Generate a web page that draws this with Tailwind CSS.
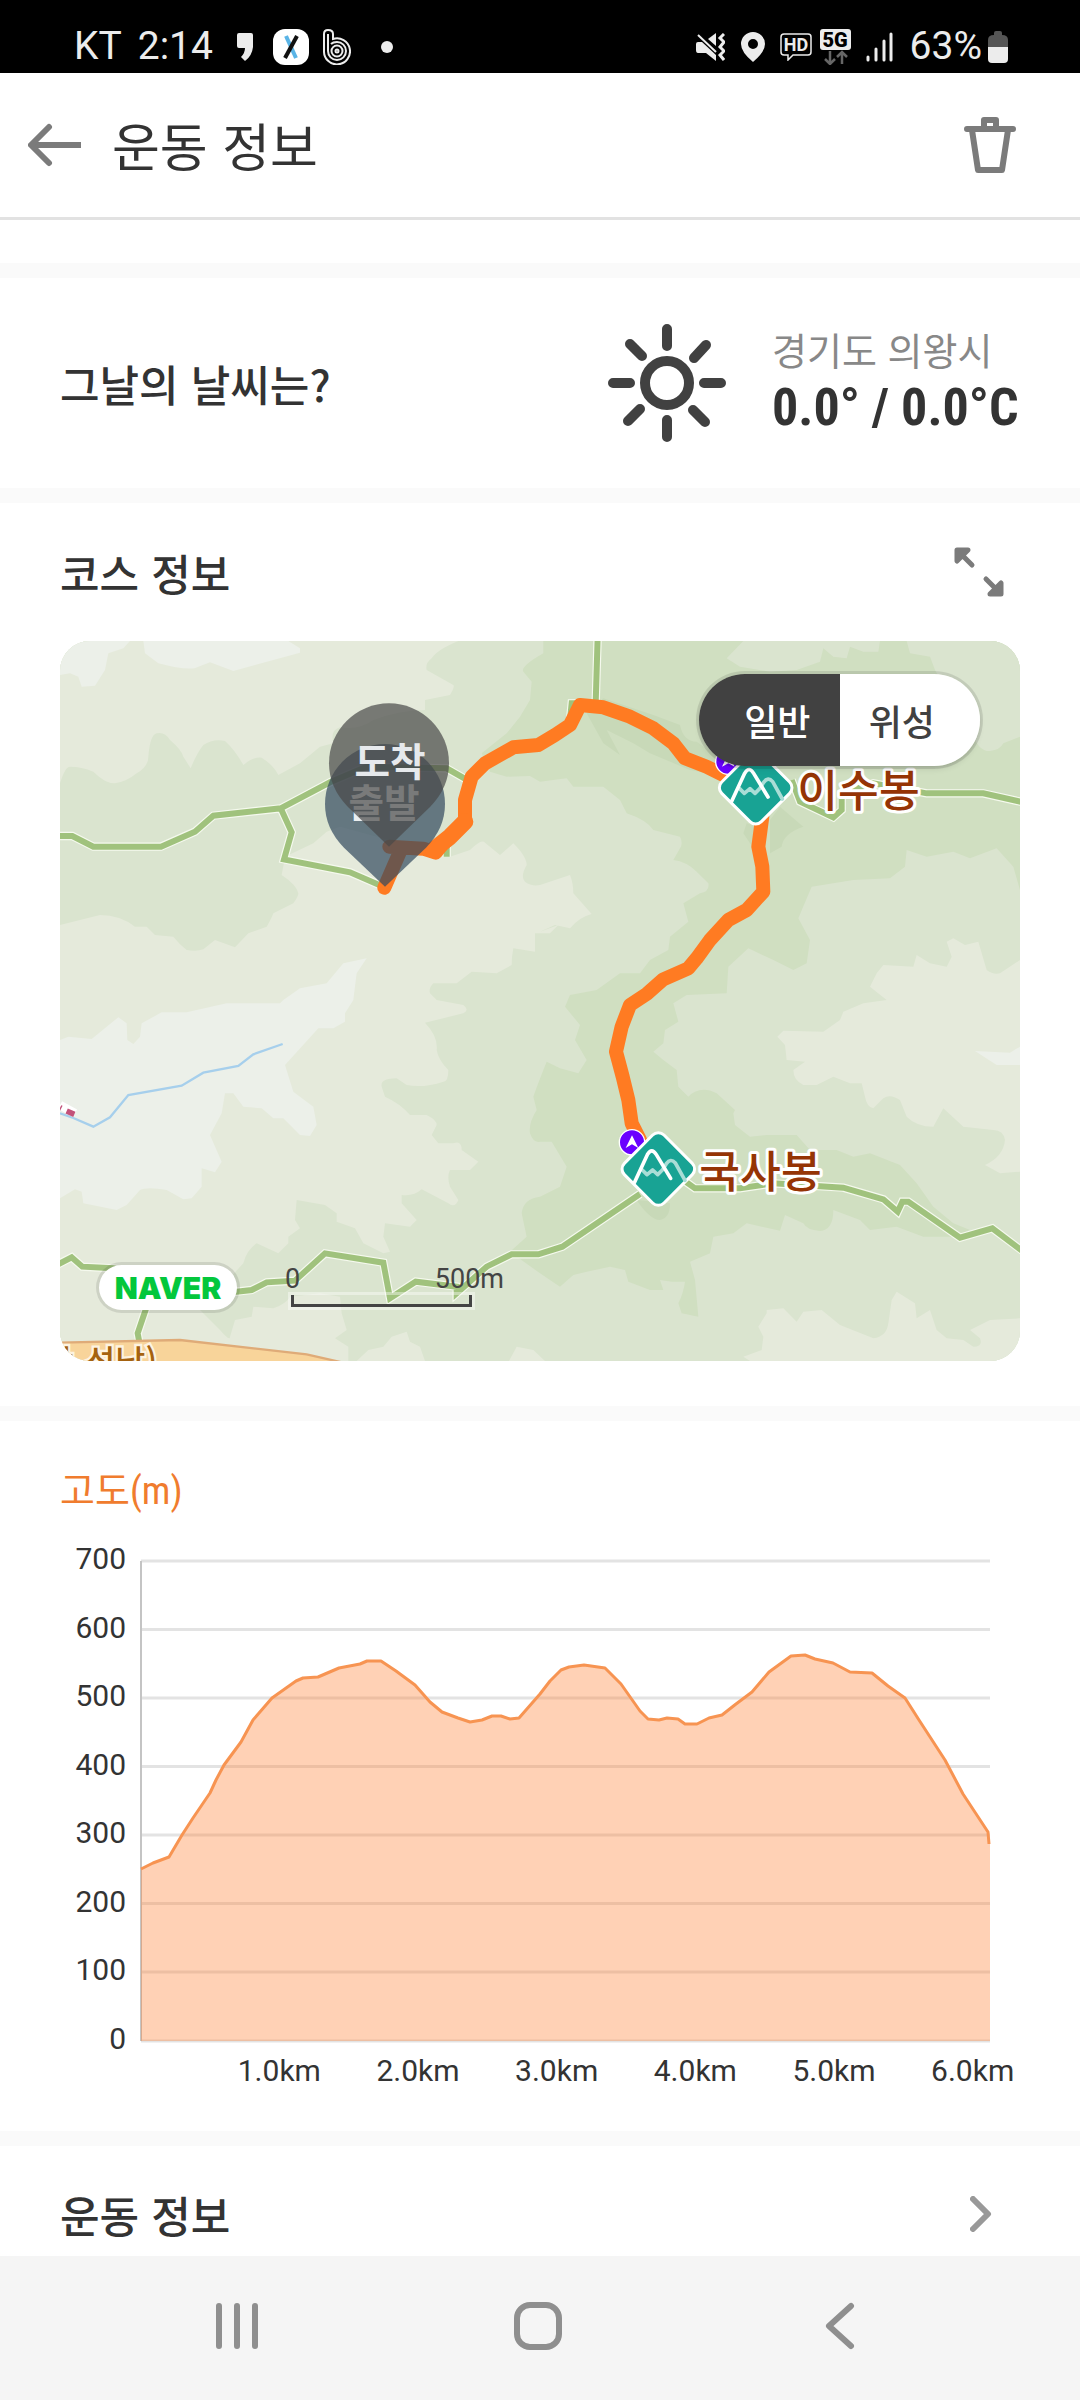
<!DOCTYPE html>
<html lang="ko">
<head>
<meta charset="utf-8">
<meta name="viewport" content="width=device-width, initial-scale=1">
<title>운동 정보</title>
<script src="https://cdn.jsdelivr.net/npm/@tailwindcss/browser@4"></script>
</head>
<body class="bg-white">
<div class="flex min-h-screen flex-col bg-white font-['Noto_Sans_CJK_KR',sans-serif] text-[#333333]">

  <!-- Status bar -->
  <div class="flex h-[73px] shrink-0 items-center bg-black pt-5 pr-[72px] pl-[74px] font-[Roboto,sans-serif] text-[39px] leading-none text-[#ececec]">
    <span>KT</span>
    <span class="ml-4">2:14</span>
    <svg class="ml-6 h-7 w-4" viewBox="0 0 16 28" fill="#ececec" aria-hidden="true"><path d="M0 2Q0 0 2 0H14Q16 0 16 2V14Q15 23 8 28L4 24Q8 20 8 15H2Q0 15 0 13Z"/></svg>
    <svg class="ml-5 h-9 w-9" viewBox="0 0 36 36" aria-hidden="true"><rect width="36" height="36" rx="12" fill="#fff"/><path d="M13 7L23 29" stroke="#5ab4e6" stroke-width="4"/><path d="M24 7L12 29" stroke="#111" stroke-width="4"/></svg>
    <svg class="ml-3.5 h-9 w-7" viewBox="0 0 28 36" fill="none" stroke="#ececec" stroke-width="2" aria-hidden="true"><path d="M1 22V5Q1 1 5 1Q10 1 10 5V10A13 13 0 1 1 1 22"/><path d="M5 5V22A9 9 0 1 0 14 13Q10 13 8 15"/><circle cx="14" cy="22" r="5.500"/><circle cx="14" cy="22" r="1.500"/></svg>
    <span class="ml-[30px] size-3 rounded-full bg-[#ececec]"></span>
    <span class="flex-1"></span>
    <svg class="h-7 w-[29px]" viewBox="0 0 29 28" fill="#ececec" aria-hidden="true"><path d="M0 11Q0 9 2 9H6L20 22V28L10 20H2Q0 20 0 17Z"/><path d="M12 6L20 0V13Z"/><path d="M2 2L20 19" stroke="#ececec" stroke-width="2"/><path d="M28 1L24 5L28 9L24 14L28 18L24 22L28 27" fill="none" stroke="#ececec" stroke-width="3"/></svg>
    <svg class="ml-4 h-[30px] w-6" viewBox="0 0 24 30" aria-hidden="true"><path fill="#ececec" fill-rule="evenodd" d="M12 0A12 12 0 0 1 24 12Q24 20 12 30Q0 20 0 12A12 12 0 0 1 12 0ZM12 7A5 5 0 1 0 12 17A5 5 0 1 0 12 7Z"/></svg>
    <svg class="ml-[15px] h-7 w-8" viewBox="0 0 32 28" aria-hidden="true"><path d="M4 1H28Q31 1 31 4V19Q31 22 28 22H13L8 27V22H4Q1 22 1 19V4Q1 1 4 1Z" fill="none" stroke="#ececec" stroke-width="1.500"/><text x="16" y="18" text-anchor="middle" font-family="Roboto" font-weight="700" font-size="18" fill="#ececec">HD</text></svg>
    <svg class="ml-2 h-9 w-8" viewBox="0 0 32 36" aria-hidden="true"><rect width="31" height="21" rx="3" fill="#ececec"/><text x="15" y="18" text-anchor="middle" font-family="Roboto" font-weight="900" font-size="20" fill="#000">5G</text><path d="M10 22V35M5 30L10 35L15 30M22 35V23M17 28L22 23L27 28" fill="none" stroke="#666" stroke-width="2.500"/></svg>
    <svg class="ml-3.5 h-[30px] w-7" viewBox="0 0 28 30" stroke="#ececec" stroke-width="3" stroke-linecap="round" aria-hidden="true"><path d="M2 25V28M10 17V28M18 9V28M25 2V28"/></svg>
    <span class="ml-4">63%</span>
    <svg class="ml-1.5 h-8 w-5" viewBox="0 0 20 32" aria-hidden="true"><path d="M6 2Q6 0 8 0H12Q14 0 14 2V4Q20 4 20 9V16H0V9Q0 4 6 4Z" fill="#555"/><path d="M0 16H20V28Q20 32 16 32H4Q0 32 0 28Z" fill="#ececec"/></svg>
  </div>

  <!-- App bar -->
  <header class="flex h-[147px] shrink-0 items-center border-b-[3px] border-[#e2e2e2] pr-16 pl-7">
    <button type="button" aria-label="뒤로">
      <svg class="h-11 w-[54px]" viewBox="0 0 54 44" fill="none" stroke="#7b7b7b" stroke-width="6"><path d="M3 22H53"/><path d="M21 4L3 22L21 40" stroke-linecap="round" stroke-linejoin="round"/></svg>
    </button>
    <h1 class="ml-[30px] flex-1 text-[52px] leading-[60px]">운동 정보</h1>
    <button type="button" aria-label="삭제">
      <svg class="h-14 w-[52px]" viewBox="0 0 52 56" fill="none" stroke="#7b7b7b" stroke-width="6" stroke-linecap="round" stroke-linejoin="round"><path d="M3 12H49M20 12V3H32V12M8 13L14 53H38L44 13"/></svg>
    </button>
  </header>

  <main class="flex-1">
    <div class="h-[43px]"></div>

    <!-- Weather -->
    <section class="flex h-[240px] items-center border-y-[15px] border-[#fafafa] px-15">
      <h2 class="flex-1 text-[43px] leading-[60px] font-medium">그날의 날씨는?</h2>
      <svg class="size-[118px]" viewBox="-59 -59 118 118" fill="none" stroke="#414141" stroke-width="10" stroke-linecap="round" role="img" aria-label="맑음"><circle r="22"/><path d="M0 -54V-37M0 54V37M-54 0H-37M54 0H37M-37 -39L-25 -27M39 -38L27 -25M-39 38L-27 26M38 39L26 27"/></svg>
      <div class="ml-[46px] w-[248px]">
        <p class="text-[38px] leading-[50px] text-[#888888]">경기도 의왕시</p>
        <p class="font-['Liberation_Sans_Narrow','Roboto_Condensed',Roboto,sans-serif] text-[52px] leading-[68px] font-bold whitespace-nowrap">0.0° / 0.0°C</p>
      </div>
    </section>

    <!-- Course map -->
    <section class="border-b-[15px] border-[#fafafa] px-15 pb-[45px]">
      <div class="flex h-[138px] items-center justify-between">
        <h2 class="text-[43px] leading-[60px] font-medium">코스 정보</h2>
        <button type="button" class="mr-4" aria-label="지도 확대">
          <svg class="size-[50px]" viewBox="0 0 50 50" fill="#7b7b7b" stroke="#7b7b7b" stroke-width="5" stroke-linecap="round" stroke-linejoin="round"><path d="M3 3H14L3 14ZM5 5L18 18M47 47H36L47 36ZM45 45L32 32"/></svg>
        </button>
      </div>

      <div class="relative overflow-hidden rounded-[30px] bg-[#dae4cf]">
        <svg class="block w-full" viewBox="60 63 2880 2160" font-family="'Noto Sans CJK KR', sans-serif" role="img" aria-label="코스 지도">
          <rect x="60" y="63" width="2880" height="2160" fill="#dae4cf"/>
          <!-- Lower slopes -->
          <g fill="#e5eadb">
            <path d="M60 490Q75 440 90 440Q125 440 160 455Q195 490 225 490Q260 485 290 460Q325 440 325 410Q330 345 350 340Q375 335 390 360Q425 390 430 410L452 445Q470 400 490 375Q520 355 555 363Q585 390 610 435Q640 410 665 413Q700 435 715 465L780 430L840 380L880 370Q870 330 900 322Q960 330 1000 300Q1080 270 1155 270V240L1230 225Q1245 200 1240 195L1160 150Q1155 130 1175 115Q1190 90 1255 63H60Z"/>
            <path d="M60 915L180 885Q240 885 285 920H320L345 945L400 950Q420 975 440 990Q470 995 490 988L525 960L585 982L625 940L680 920Q695 895 700 880L760 850Q775 830 775 820Q770 795 725 765L735 710L820 670L860 635L900 620L1230 710L1290 690Q1325 655 1335 668L1380 705L1420 670Q1460 710 1460 735Q1440 770 1455 785Q1475 800 1500 795L1590 765Q1600 790 1600 820L1655 882Q1620 890 1590 925L1545 915L1500 935L1555 915L1530 940H1485V995L1420 985Q1415 1010 1415 1035L1370 1060L1295 1055L1250 1090H1180Q1165 1105 1170 1120L1190 1140L1270 1155Q1290 1170 1270 1180L1155 1208Q1195 1250 1190 1290Q1195 1320 1225 1350Q1225 1385 1210 1385Q1150 1405 1100 1395L1070 1375Q1020 1375 1025 1400L1035 1430Q1080 1450 1110 1485H1160Q1190 1500 1190 1515L1175 1545L1195 1570H1240Q1265 1560 1265 1590L1315 1625L1290 1650H1230Q1220 1670 1230 1700L1255 1740Q1245 1765 1225 1750L1145 1708Q1120 1730 1085 1725V1750L1130 1800L1110 1820L1035 1810L1030 1850L1050 1895L1030 1900L970 1870L945 1825L890 1805V1780L855 1755L770 1740L765 1800L780 1825L745 1850V1870L715 1900L650 1870Q620 1890 610 1930L480 2070L540 2130Q570 2165 570 2150L585 2100L635 2090L640 2060L700 2065Q740 2050 750 2030L840 2020L900 2030L905 2080L920 2130L885 2155L925 2180V2223H60Z"/>
            <path d="M950 2223L985 2190L1030 2180L1055 2150L1100 2135L1110 2165L1140 2180L1155 2223ZM1407 2223L1430 2180L1480 2190L1515 2223Z"/>
            <path d="M2490 1100L2510 1060L2530 1035L2620 1040L2630 1005L2670 1030L2720 1040L2735 1010L2720 965L2740 955L2775 975L2815 965L2840 1050Q2860 1065 2880 1060L2940 1020V1655L2880 1660L2835 1635Q2890 1610 2895 1560Q2890 1530 2860 1530L2770 1520L2710 1465L2680 1520Q2630 1520 2600 1490L2580 1440Q2550 1420 2530 1435L2500 1465Q2480 1460 2475 1430L2465 1390H2430L2380 1370L2330 1395H2290Q2260 1380 2260 1350L2295 1325L2240 1320L2235 1275L2212 1250L2230 1232L2350 1235L2400 1200L2410 1175L2470 1150L2540 1140Z"/>
            <path d="M2110 2210L2165 2190L2170 2150L2155 2120L2180 2080V2070L2230 2065L2270 2105L2290 2075L2345 2070L2400 2115L2500 2155Q2540 2150 2545 2110L2555 2040L2570 2015L2625 2050L2630 2095L2670 2070L2690 2130L2720 2155L2770 2160L2800 2180Q2830 2180 2820 2155L2790 2130L2850 2100L2940 2095V2223H2130Z"/>
          </g>
          <g fill="#ecf0e9">
            <path d="M60 165L90 160L115 170L125 200L165 197L195 150L205 100L250 85L270 63H60ZM310 63L315 100L355 130Q450 155 475 140L510 127L580 153L780 98V85L745 63Z"/>
            <path d="M730 1140L780 1105L860 1090L910 1030L980 1015L950 1060L940 1140L915 1180V1205L880 1225H835L735 1335L760 1415L820 1460L830 1515L810 1548L780 1545L730 1495H700L665 1465L610 1460L580 1420H555L545 1480L510 1545L545 1625L525 1657L485 1645V1700L455 1735L430 1738L380 1710Q320 1700 300 1710L260 1755L230 1770L130 1750L125 1715L105 1708L60 1735V1260L85 1250L155 1257L235 1192L260 1210L262 1260L280 1272L300 1250L305 1210L365 1177H440L560 1150H720Z"/>
            <path d="M2805 1293L2910 1298L2940 1280V1335H2870Z"/>
          </g>
          <!-- Ridges -->
          <path fill="#d0dfc1" d="M1510 63V100Q1440 140 1450 155L1475 185L1470 240L1440 290L1400 340L1325 400L1350 455L1400 470L1470 468L1500 485L1580 475L1600 500L1690 500L1740 540L1760 580Q1820 600 1840 630L1920 650Q1930 670 1920 685L1900 720Q1940 725 1970 755L2005 790Q2010 815 1980 820L1930 850L1945 905L1890 950L1885 990L1830 1020L1800 1060H1740L1670 1110L1590 1125L1575 1160L1620 1215L1605 1260L1640 1320L1615 1360L1560 1345L1520 1325Q1490 1400 1480 1430L1490 1470Q1465 1510 1470 1540Q1480 1570 1500 1565L1535 1565L1580 1640L1560 1700L1500 1730Q1450 1735 1445 1780L1460 1850L1410 1895L1500 1960L1560 2000L1600 1965L1640 1955L1710 1940L1755 1950L1765 1985L1830 2010L1870 2010L1860 1980L1895 1985L1935 1985Q1930 2020 1915 2050L1925 2080L1975 2090L1965 1980L1950 1925L2010 1900L2020 1850L2080 1840L2120 1810L2220 1832L2235 1785L2290 1810Q2300 1830 2340 1833Q2380 1830 2380 1770L2460 1800L2490 1830L2570 1820L2650 1850H2740L2790 1830L2740 1810L2680 1760L2630 1690L2580 1635L2490 1600L2440 1610L2390 1590L2310 1590L2270 1545H2180L2130 1550L2085 1515L2080 1480L2085 1470L2030 1420Q1980 1395 1945 1430L1915 1400L1910 1350L1870 1320L1840 1295L1870 1270L1875 1230L1915 1205L1900 1150L1940 1125L2060 1120L2065 1040L2125 985L2200 1020L2260 1050L2300 1030L2310 960L2275 895L2315 800L2440 780L2550 775L2595 740L2600 690L2660 710L2740 695L2790 715L2870 685L2920 740L2940 810V63Z"/>
          <g fill="#dae4cf">
            <path d="M2060 115L2110 63H2520L2515 95H2470L2430 80L2420 115L2380 110L2350 85L2340 125L2270 150L2190 155L2100 140Z"/>
            <path d="M2600 63L2610 100L2670 110L2685 150L2800 350Q2820 395 2850 393Q2880 390 2890 370L2940 350V63Z"/>
          </g>
          <g fill="#c8d9b8">
            <path d="M1690 235L1840 285L1920 315Q1930 365 1970 365L2060 430V470L1950 450L1830 400L1780 370L1700 330L1740 405L1690 370L1640 280Z"/>
            <path d="M2220 560L2290 620Q2230 640 2225 680L2190 700V600ZM2120 610L2110 640L2150 700V620ZM1790 1740Q1830 1800 1860 1800Q1890 1795 1890 1750Z"/>
          </g>
          <!-- Stream and boundary mark -->
          <path d="M60 1480L100 1494L160 1520L210 1492L265 1425L425 1397L490 1358L595 1338L640 1303L728 1272" fill="none" stroke="#a6cfec" stroke-width="7"/>
          <path d="M60 1455L105 1480" stroke="#fff" stroke-width="26"/><path d="M60 1463L64 1465M80 1473L103 1483" stroke="#c2527a" stroke-width="17"/>
          <!-- Trails -->
          <g fill="none">
            <g stroke="#f5f9ee" stroke-width="25">
              <path id="trail" d="M50 648H97L160 680H363L465 635L520 587L722 565L870 487L980 440L1220 445L1290 485M722 565L755 637L732 718L930 757L1030 800M1220 710V680M1673 50L1667 250M1590 300L1595 250L1630 250M2255 480L2280 545L2380 592L2405 570V520L2500 490L2660 520H2830L2950 547M50 1935L95 1912L127 1940L220 1945L500 2010L590 2015L635 2010L680 1987L765 1982L855 1900L1030 1928L1050 2035L1127 1985L1250 2000V2020L1340 1940L1415 1903H1495L1567 1880L1800 1722M1930 1680L1965 1705H2100L2200 1690L2410 1703L2530 1738L2573 1775L2587 1745H2605L2760 1853L2857 1825L2950 1895M320 2060L293 2140L310 2230"/>
            </g>
            <path stroke="#a0c27d" stroke-width="18" d="M50 648H97L160 680H363L465 635L520 587L722 565L870 487L980 440L1220 445L1290 485M722 565L755 637L732 718L930 757L1030 800M1220 710V680M1673 50L1667 250M1590 300L1595 250L1630 250M2255 480L2280 545L2380 592L2405 570V520L2500 490L2660 520H2830L2950 547M50 1935L95 1912L127 1940L220 1945L500 2010L590 2015L635 2010L680 1987L765 1982L855 1900L1030 1928L1050 2035L1127 1985L1250 2000V2020L1340 1940L1415 1903H1495L1567 1880L1800 1722M1930 1680L1965 1705H2100L2200 1690L2410 1703L2530 1738L2573 1775L2587 1745H2605L2760 1853L2857 1825L2950 1895M320 2060L293 2140L310 2230"/>
          </g>
          <!-- Highway -->
          <path d="M50 2168L420 2160L800 2203L940 2235H50Z" fill="#f8d49a" stroke="#dfab78" stroke-width="7"/>
          <text x="136" y="2262" font-size="98" font-weight="500" fill="#a5620f" stroke="#fdf3e0" stroke-width="14" paint-order="stroke" text-anchor="start">성남)</text>
          <text x="100" y="2262" font-size="98" font-weight="500" fill="#a5620f" stroke="#fdf3e0" stroke-width="14" paint-order="stroke" text-anchor="end">상</text>
          <!-- Recorded route -->
          <g fill="none" stroke="#ff7b22" stroke-width="42" stroke-linejoin="round" stroke-linecap="round">
            <path d="M1033 803L1080 695M1048 680L1150 686L1187 698L1220 658L1275 605V540L1295 470L1335 430L1420 382L1495 375L1545 345L1590 315L1620 255L1690 262L1770 290L1840 325L1900 370L1935 415L2000 440L2080 480"/>
            <path d="M1180 690L1230 650L1275 605" stroke-width="50"/>
            <path d="M2167 590L2155 680L2167 740L2170 815L2120 870L2065 900L2010 960L1970 1015L1945 1045L1870 1078L1820 1122L1770 1155L1745 1220L1728 1295L1748 1370L1765 1440L1775 1510L1800 1560"/>
          </g>
          <!-- Direction marks -->
          <g fill="#6a00ff" stroke="#fff" stroke-width="4">
            <circle cx="2065" cy="425" r="38"/><circle cx="1776" cy="1567" r="38"/>
            <path d="M2065 402L2084 440L2065 430L2046 440ZM1776 1546L1795 1584L1776 1573L1757 1584Z" fill="#fff" stroke="none"/>
          </g>
          <!-- Peaks -->
          <defs>
            <g id="peak">
              <rect x="-84" y="-84" width="168" height="168" rx="24" transform="rotate(45)" fill="#18a394" stroke="#fff" stroke-width="9"/>
              <g fill="none" stroke-linecap="round" stroke-linejoin="round" stroke-width="11">
                <path d="M-48 3L-34 17L-17 3L-2 17L12 3L24 -16Q37 -34 51 -18L80 34" stroke="#a9ddd6"/>
                <path d="M-72 41L-33 -43Q-20 -66 -6 -43L37 28" stroke="#fff"/>
              </g>
            </g>
          </defs>
          <use href="#peak" x="2147" y="503"/>
          <use href="#peak" x="1855" y="1647"/>
          <g font-size="133" font-weight="500" fill="#953405" stroke="#fff" stroke-width="18" stroke-linejoin="round" paint-order="stroke">
            <text x="2272" y="560">이수봉</text>
            <text x="1978" y="1704">국사봉</text>
          </g>
          <!-- Start and finish pins -->
          <g text-anchor="middle" font-size="116" font-weight="700">
            <path d="M1035 800L912 683Q855 625 855 552A180 180 0 0 1 1215 552Q1215 625 1158 683Z" fill="#32495e" fill-opacity=".7"/>
            <text x="1032" y="592" fill="#fff" fill-opacity=".9">출발</text>
            <path d="M1047 680L924 561Q867 503 867 430A180 180 0 0 1 1227 430Q1227 503 1170 561Z" fill="#484848" fill-opacity=".7"/>
            <text x="1050" y="468" fill="#e6e9ec">도착</text>
          </g>
        </svg>

        <div class="absolute top-[33px] right-10 flex h-[92px] w-[281px] overflow-hidden rounded-full text-[36px] leading-none font-medium shadow-md ring-3 ring-black/10" role="group" aria-label="지도 종류">
          <button type="button" aria-pressed="true" class="flex-1 bg-[#414141] pl-4 text-white">일반</button>
          <button type="button" aria-pressed="false" class="flex-1 bg-white pr-4 text-[#414141]">위성</button>
        </div>

        <a href="#" class="absolute bottom-[51px] left-[39px] flex h-[45px] w-[138px] items-center justify-center rounded-full bg-white font-[Inter,sans-serif] text-[30px] leading-none font-black text-[#03c73c] ring-3 ring-black/10">NAVER</a>

        <div class="absolute bottom-[54px] left-[231px] w-[181px] font-[Roboto,sans-serif] text-[27px] leading-6 text-[#444444]">
          <div class="-mr-8 -ml-1.5 flex justify-between pb-1"><span>0</span><span>500m</span></div>
          <div class="h-3 border-x-[3px] border-b-[3px] border-[#444444] ring-3 ring-white/40"></div>
        </div>
      </div>
    </section>

    <!-- Elevation chart -->
    <section class="border-b-[15px] border-[#fafafa] pt-[42px] pb-[42px]">
      <h2 class="px-15 font-['Roboto_Condensed','Noto_Sans_CJK_KR',sans-serif] text-[38px] leading-[56px] text-[#f07c2e]">고도(m)</h2>
      <div class="mt-[42px] flex pr-[90px] pl-15 font-[Roboto,sans-serif] text-[30px] leading-8">
        <div class="-mt-4.5 -mb-3.5 flex w-[66px] flex-col justify-between text-right">
          <span>700</span><span>600</span><span>500</span><span>400</span><span>300</span><span>200</span><span>100</span><span>0</span>
        </div>
        <svg class="ml-[15px] h-[480px] min-w-0 flex-1 overflow-visible" viewBox="0 0 849 480" preserveAspectRatio="none" role="img" aria-label="거리별 고도">
          <path d="M0 0H849M0 68.500H849M0 137H849M0 205.500H849M0 274H849M0 342.500H849M0 411H849M0 480H849" stroke="#e3e3e3" stroke-width="3"/>
          <path d="M0 0V480" stroke="#c4c4c4" stroke-width="2"/>
          <path fill="#ff7a2c" fill-opacity=".35" d="M0 308L12 302L28 296L41 274L52 257L69 232L75 219L83 204L100 181L112 159L131 137L155 120L162 117L177 116L198 107L219 103L226 100L240 100L255 110L274 124L289 141L301 151L317 157L329 161L341 159L351 155H360L369 158L378 157L399 133L409 120L420 109L428 106L443 104L464 107L480 123L499 150L507 158L518 159L526 157L537 158L544 163H556L568 157L581 154L595 143L611 131L628 111L650 95L664 94L674 98L692 102L709 111L731 112L747 125L764 137L778 159L804 199L822 233L847 271L849 283V480H0Z"/>
          <path fill="none" stroke="#f79452" stroke-width="3" stroke-linejoin="round" d="M0 308L12 302L28 296L41 274L52 257L69 232L75 219L83 204L100 181L112 159L131 137L155 120L162 117L177 116L198 107L219 103L226 100L240 100L255 110L274 124L289 141L301 151L317 157L329 161L341 159L351 155H360L369 158L378 157L399 133L409 120L420 109L428 106L443 104L464 107L480 123L499 150L507 158L518 159L526 157L537 158L544 163H556L568 157L581 154L595 143L611 131L628 111L650 95L664 94L674 98L692 102L709 111L731 112L747 125L764 137L778 159L804 199L822 233L847 271L848 283"/>
        </svg>
      </div>
      <div class="mt-3 mr-[38px] ml-[210px] grid grid-cols-6 text-center font-[Roboto,sans-serif] text-[30px] leading-9">
        <span>1.0km</span><span>2.0km</span><span>3.0km</span><span>4.0km</span><span>5.0km</span><span>6.0km</span>
      </div>
    </section>

    <!-- Exercise details -->
    <section>
      <a href="#" class="flex items-center justify-between pt-[38px] pr-[88px] pb-3 pl-15">
        <h2 class="text-[43px] leading-[60px] font-medium">운동 정보</h2>
        <svg class="h-9 w-[22px]" viewBox="0 0 22 36" fill="none" stroke="#999" stroke-width="6" stroke-linecap="round" stroke-linejoin="round" aria-hidden="true"><path d="M3 3L18 18L3 33"/></svg>
      </a>
    </section>
  </main>

  <!-- System navigation -->
  <nav class="grid h-36 shrink-0 grid-cols-3 place-items-center bg-[#f5f5f5] pr-[90px] pb-1 pl-[86px]" aria-label="시스템 탐색">
    <button type="button" aria-label="최근 앱"><svg class="size-12" viewBox="0 0 48 48" stroke="#8f8f8f" stroke-width="6" stroke-linecap="round"><path d="M6 4V44M24 4V44M42 4V44"/></svg></button>
    <button type="button" aria-label="홈"><svg class="size-12" viewBox="0 0 48 48" fill="none" stroke="#8f8f8f" stroke-width="6"><rect x="3" y="3" width="42" height="42" rx="13"/></svg></button>
    <button type="button" aria-label="뒤로"><svg class="size-12" viewBox="0 0 48 48" fill="none" stroke="#8f8f8f" stroke-width="6" stroke-linecap="round" stroke-linejoin="round"><path d="M36 4L14 24L36 44"/></svg></button>
  </nav>
</div>
</body>
</html>
